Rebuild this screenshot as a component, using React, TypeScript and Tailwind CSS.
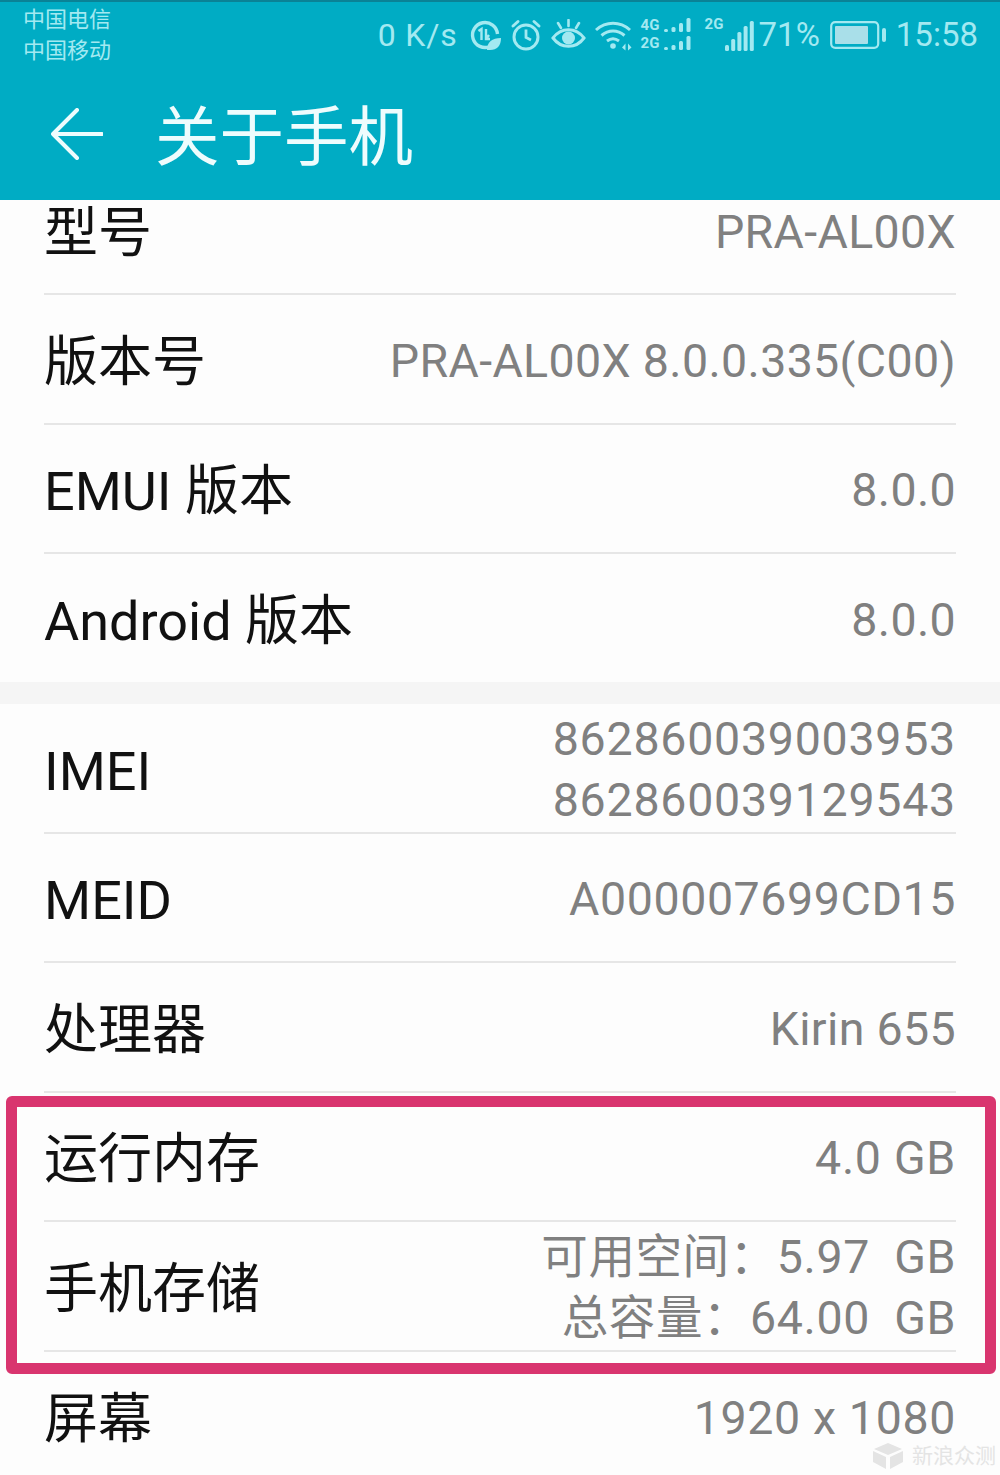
import React from "react";

const FONT = "font-['Roboto','Noto_Sans_CJK_SC',sans-serif]";

// Signal bars used by the dual-sim indicators
function Bars({ heights, w, gap, h }: { heights: number[]; w: number; gap: number; h: number }) {
  const step = w + gap;
  return (
    <svg width={heights.length * step} height={h} fill="currentColor">
      {heights.map((bar, i) => (
        <rect key={i} x={i * step} y={h - bar} width={w} height={bar} rx={w / 2 > 1.5 ? 1.5 : w / 2} />
      ))}
    </svg>
  );
}

function StatusIcons() {
  return (
    <>
      {/* one-hand mode with leaf */}
      <svg width="32" height="32" viewBox="0 0 32 32" fill="none" stroke="currentColor" className="ml-[11px]">
        <path d="M21 27.5A12.5 12.5 0 1 1 28.5 15" strokeWidth="3.4" />
        <path d="M9.5 12l3-2v11M17 10v10h4M20 16l-3 4" strokeWidth="2.4" />
        <path d="M18 31c0-8 5-12 14-12 0 8-4 12-11 12z" fill="currentColor" stroke="none" />
      </svg>
      {/* alarm */}
      <svg width="32" height="32" viewBox="0 0 32 32" fill="none" stroke="currentColor" className="ml-[9px]">
        <circle cx="16" cy="18" r="12" strokeWidth="3" />
        <path d="M16 10.5V18.5L21 21" strokeWidth="2.8" />
        <path d="M3 7l5-4.5M29 7l-5-4.5" strokeWidth="3" strokeLinecap="round" />
      </svg>
      {/* eye comfort */}
      <svg width="35" height="32" viewBox="0 0 35 32" fill="none" stroke="currentColor" className="ml-[9px]">
        <path d="M2 19c8-11 23-11 31 0-8 11-23 11-31 0z" strokeWidth="3" />
        <circle cx="17.5" cy="19" r="6.5" fill="currentColor" stroke="none" />
        <path d="M17.5 1v6M7 4l3 5M28 4l-3 5" strokeWidth="2.6" strokeLinecap="round" />
      </svg>
      {/* wifi with traffic arrows */}
      <svg width="37" height="32" viewBox="0 0 37 32" fill="none" stroke="currentColor" className="ml-[9px]">
        <path d="M1 11c10-9 24-9 34 0M6.5 16.5c7-6 16-6 23 0M12 22c4-3 8-3 12 0" strokeWidth="3" />
        <circle cx="18" cy="27" r="2.8" fill="currentColor" stroke="none" />
        <path d="M27 28.5l3.5-4v7zM36.5 28.5l-3.5-4v7z" fill="currentColor" stroke="none" />
      </svg>
      {/* sim 1: stacked 4G / 2G */}
      <div className="ml-[9px] mb-[3px] flex flex-col gap-[4px] text-[15px] font-bold leading-[14px]">
        <div className="flex items-end gap-[3px]">
          <span className="w-[20px]">4G</span>
          <Bars heights={[3, 5, 9, 14]} w={4} gap={3.5} h={14} />
        </div>
        <div className="flex items-end gap-[3px]">
          <span className="w-[20px]">2G</span>
          <Bars heights={[3, 5, 9, 14]} w={4} gap={3.5} h={14} />
        </div>
      </div>
      {/* sim 2: 2G with full signal */}
      <div className="ml-[11px] flex items-end h-[32px]">
        <span className="self-start text-[15px] font-bold leading-[14px] w-[20px] mt-[-2px]">2G</span>
        <Bars heights={[6, 12, 19, 25, 30]} w={4} gap={2.2} h={30} />
      </div>
    </>
  );
}

function StatusBar() {
  return (
    <div className="flex h-[66px] items-start justify-between pl-[23px] pr-[22px] text-[#a3e9f1]">
      <div className="pt-[2px] text-[22px] leading-[31px]">
        <div>中国电信</div>
        <div>中国移动</div>
      </div>
      <div className="flex h-[66px] items-center">
        <span className="text-[32px] tracking-[0.8px]">0 K/s</span>
        <StatusIcons />
        <span className="ml-[3px] text-[33px]">71%</span>
        {/* battery */}
        <svg width="56" height="28" viewBox="0 0 56 28" className="ml-[10px]" fill="none">
          <rect x="1.2" y="1.2" width="47" height="25.6" rx="4" stroke="currentColor" strokeWidth="2.2" />
          <rect x="5" y="5" width="33" height="18" rx="1" fill="#a9dfe9" />
          <rect x="52" y="7" width="4" height="14" rx="2" fill="currentColor" />
        </svg>
        <span className="ml-[10px] text-[33px]">15:58</span>
      </div>
    </div>
  );
}

function Header() {
  return (
    <header className="h-[200px] border-t-2 border-[#0a8296] bg-[#00acc4]">
      <StatusBar />
      <div className="flex h-[132px] items-center pl-[51px] text-white">
        <svg width="52" height="52" viewBox="0 0 52 52" fill="none" stroke="#eefcfd" strokeWidth="4" strokeLinecap="round" strokeLinejoin="round">
          <path d="M26 2L2 26l24 24M2 26h49" />
        </svg>
        <h1 className="ml-[52px] pt-[8px] text-[64.5px] leading-none font-normal text-[#eefcfd]">关于手机</h1>
      </div>
    </header>
  );
}

function Row({
  label,
  values,
  last,
  className,
  valueClass,
}: {
  label: string;
  values: string[];
  last?: boolean;
  className?: string;
  valueClass?: string;
}) {
  return (
    <div
      className={
        "mx-[44px] flex box-border items-center justify-between " +
        (last ? "" : "border-b-2 border-[#e6e6e6] ") +
        (className ?? "h-[129.5px]")
      }
    >
      <span className="pt-[8px] text-[54px] leading-none text-[#111111]">{label}</span>
      <div className={"pt-[5px] text-right text-[46.5px] leading-[61px] whitespace-pre text-[#808080] " + (valueClass ?? "tracking-[0.35px]")}>
        {values.map((value) => (
          <div key={value}>{value}</div>
        ))}
      </div>
    </div>
  );
}

export default function App() {
  return (
    <div className={"relative h-[1475px] w-[1000px] overflow-hidden bg-[#fdfdfd] " + FONT}>
      <Header />
      {/* first row is scrolled partly under the header */}
      <Row label="型号" values={["PRA-AL00X"]} className="h-[95px] pb-[33px]" />
      <Row label="版本号" values={["PRA-AL00X 8.0.0.335(C00)"]} />
      <Row label="EMUI 版本" values={["8.0.0"]} />
      <Row label="Android 版本" values={["8.0.0"]} last className="h-[128px]" />
      <div className="h-[22px] bg-[#f5f5f5]" />
      <Row label="IMEI" values={["862860039003953", "862860039129543"]} valueClass="tracking-[0.75px]" />
      <Row label="MEID" values={["A000007699CD15"]} valueClass="tracking-[0.6px]" />
      <Row label="处理器" values={["Kirin 655"]} />
      <div className="relative">
        <Row label="运行内存" values={["4.0 GB"]} valueClass="tracking-[0.7px]" />
        <Row label="手机存储" values={["可用空间：5.97  GB", "总容量：64.00  GB"]} valueClass="tracking-[0.6px]" />
        {/* highlight frame drawn over the two storage rows */}
        <div className="pointer-events-none absolute left-[6px] right-[4px] top-[3px] bottom-[-22px] rounded-[6px] border-[11px] border-[#d9356f]" />
      </div>
      <Row label="屏幕" values={["1920 x 1080"]} last valueClass="tracking-[0.65px]" />
      {/* publisher watermark */}
      <div className="absolute bottom-[3px] right-[4px] flex items-center gap-[9px] text-[21px] text-[#e4e4e4]">
        <svg width="30" height="26" viewBox="0 0 30 26" fill="#e4e4e4">
          <path d="M15 0l14 6-14 6L1 6zM0 8l13 6v12L0 19zM30 8v11l-13 7V14z" />
        </svg>
        <span>新浪众测</span>
      </div>
    </div>
  );
}
